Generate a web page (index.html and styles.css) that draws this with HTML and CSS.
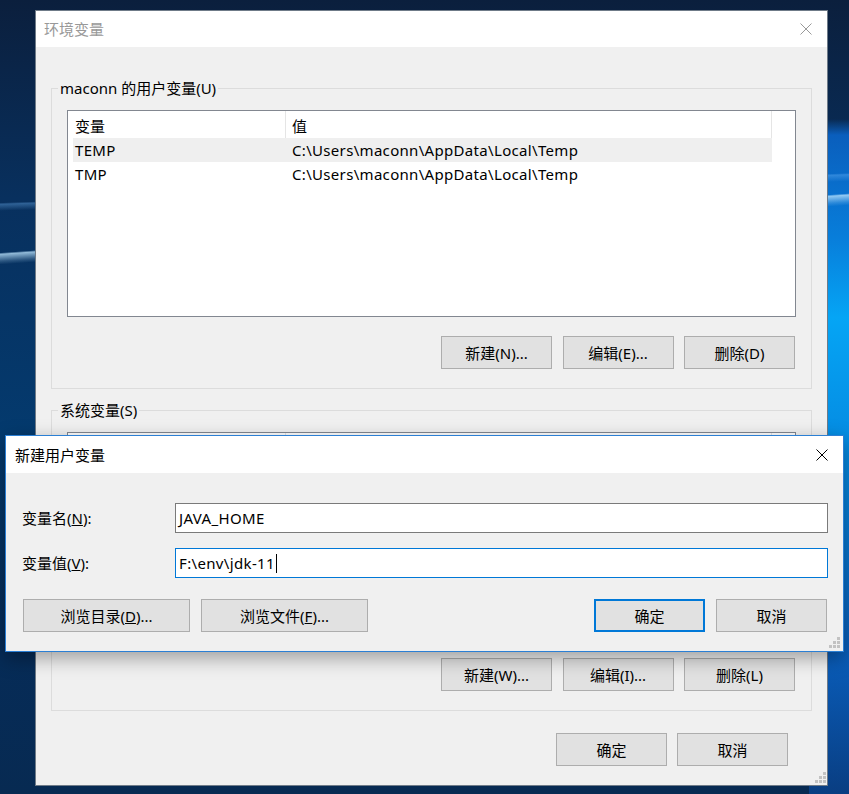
FILE: index.html
```html
<!doctype html>
<html>
  <head>
    <meta charset="utf-8">
    <title>环境变量</title>
    <link rel="stylesheet" href="styles.css">
  </head>
  <body>
    <!-- 环境变量 (inactive, behind the modal) -->
    <div class="window main">
      <div class="titlebar">
        <span class="title">环境变量</span>
        <svg class="close" width="12" height="12" viewBox="0 0 12 12"><path d="M0.5 0.5L11.5 11.5M11.5 0.5L0.5 11.5" /></svg>
      </div>
      <div class="body">
        <fieldset class="group">
          <legend>maconn 的用户变量(U)</legend>
          <div class="list">
            <div class="list-head">
              <span class="col-name">变量</span>
              <span class="col-value">值</span>
            </div>
            <div class="row selected">
              <span class="col-name">TEMP</span>
              <span class="col-value">C:\Users\maconn\AppData\Local\Temp</span>
            </div>
            <div class="row">
              <span class="col-name">TMP</span>
              <span class="col-value">C:\Users\maconn\AppData\Local\Temp</span>
            </div>
          </div>
          <div class="buttons">
            <button class="btn">新建(N)...</button>
            <button class="btn">编辑(E)...</button>
            <button class="btn">删除(D)</button>
          </div>
        </fieldset>

        <fieldset class="group second">
          <legend>系统变量(S)</legend>
          <!-- hidden under the dialog: only the header edge shows -->
          <div class="list">
            <div class="list-head">
              <span class="col-name"></span>
              <span class="col-value"></span>
            </div>
          </div>
          <div class="buttons">
            <button class="btn">新建(W)...</button>
            <button class="btn">编辑(I)...</button>
            <button class="btn">删除(L)</button>
          </div>
        </fieldset>

        <div class="buttons footer">
          <button class="btn">确定</button>
          <button class="btn">取消</button>
        </div>
      </div>
      <svg class="grip" width="11" height="11" viewBox="0 0 11 11"><rect x="8" y="0" width="3" height="3"/><rect x="4" y="4" width="3" height="3"/><rect x="8" y="4" width="3" height="3"/><rect x="0" y="8" width="3" height="3"/><rect x="4" y="8" width="3" height="3"/><rect x="8" y="8" width="3" height="3"/></svg>
    </div>

    <!-- 新建用户变量 (modal) -->
    <div class="window dialog">
      <div class="titlebar">
        <span class="title">新建用户变量</span>
        <svg class="close" width="12" height="12" viewBox="0 0 12 12"><path d="M0.5 0.5L11.5 11.5M11.5 0.5L0.5 11.5" /></svg>
      </div>
      <div class="body">
        <div class="form">
          <label>变量名(<u>N</u>):</label>
          <div class="field">JAVA_HOME</div>
          <label>变量值(<u>V</u>):</label>
          <div class="field focus">F:\env\jdk-11<span class="caret"></span></div>
        </div>
        <div class="buttons dialog-buttons">
          <button class="btn wide">浏览目录(<u>D</u>)...</button>
          <button class="btn wide">浏览文件(<u>F</u>)...</button>
          <span class="spacer"></span>
          <button class="btn default">确定</button>
          <button class="btn">取消</button>
        </div>
      </div>
      <svg class="grip" width="11" height="11" viewBox="0 0 11 11"><rect x="8" y="0" width="3" height="3"/><rect x="4" y="4" width="3" height="3"/><rect x="8" y="4" width="3" height="3"/><rect x="0" y="8" width="3" height="3"/><rect x="4" y="8" width="3" height="3"/><rect x="8" y="8" width="3" height="3"/></svg>
    </div>
  </body>
</html>
```

FILE: styles.css
```css
* {
  box-sizing: border-box;
}

html, body {
  margin: 0;
}

body {
  position: relative;
  width: 849px;
  height: 794px;
  overflow: hidden;
  font-family: "Noto Sans", "Noto Sans CJK SC", sans-serif;
  font-size: 15px;
  line-height: 20px;
  color: #000;
  background-color: #062c58;
  background-image:
    linear-gradient(176deg, transparent 0 29.6%, rgba(190,230,255,.75) 29.8%, rgba(190,230,255,.2) 30.6%, transparent 31%),
    linear-gradient(178deg, transparent 0 24.6%, rgba(120,190,255,.35) 24.8%, transparent 25.6%),
    linear-gradient(180deg, transparent 0 15%, rgba(10,100,200,.9) 17%, rgba(8,130,225,.95) 30%, rgba(5,165,245,1) 40%, rgba(5,150,240,.9) 55%, rgba(10,100,200,.85) 83%, rgba(10,70,150,.7) 100%),
    linear-gradient(180deg, #0b1f3d 0%, #08305e 25%, #043a6e 55%, #062c58 80%, #072a52 100%);
  background-size: 100% 100%, 100% 100%, 40px 100%, 100% 100%;
  background-position: 0 0, 0 0, right top, 0 0;
  background-repeat: no-repeat;
}

/* windows */

.window {
  position: absolute;
  background: #f0f0f0;
}

.main {
  left: 35px;
  top: 10px;
  width: 793px;
  height: 776px;
  border: 1px solid #6f7b88;
}

.dialog {
  left: 5px;
  top: 435px;
  width: 839px;
  height: 217px;
  border: 1px solid #2b7fd4;
  box-shadow: 0 6px 18px rgba(0,0,0,.35);
}

.titlebar {
  display: flex;
  align-items: center;
  height: 36px;
  padding-left: 8px;
  background: #fff;
}

.dialog .titlebar {
  height: 37px;
  padding-left: 9px;
}

.main .title {
  color: #999;
}

.close {
  margin-left: auto;
  margin-right: 15px;
  fill: none;
  stroke: #000;
  stroke-width: 1;
}

.main .close {
  stroke: #999;
}

.grip {
  position: absolute;
  right: 1px;
  bottom: 2px;
  fill: #c2c2c2;
}

.dialog .grip {
  right: 3px;
  bottom: 3px;
}

/* environment window body */

.main .body {
  padding: 0 39px 0 0;
}

.group {
  margin: 31px -24px 0 15px;
  padding: 12px 15px 19px 15px;
  border: 1px solid #dcdcdc;
  min-width: 0;
}

.group.second {
  margin-top: 11px;
}

.group legend {
  margin-left: -9px;
  padding: 0 2px;
  line-height: 20px;
}

.list {
  height: 207px;
  background: #fff;
  border: 1px solid #828790;
}

.list-head {
  display: flex;
  width: 704px;
  height: 27px;
}

.list-head span {
  display: flex;
  align-items: center;
  padding-top: 3px;
  border-right: 1px solid #e5e5e5;
}

.list-head .col-name {
  width: 218px;
  padding-left: 7px;
}

.list-head .col-value {
  flex: 1;
  padding-left: 6px;
}

.row {
  display: flex;
  align-items: center;
  width: 699px;
  height: 24px;
  margin-left: 5px;
  letter-spacing: 0.32px;
}

.row.selected {
  background: #efefef;
}

.row .col-name {
  width: 212px;
  padding-left: 2px;
}

.row .col-value {
  padding-left: 7px;
}

.buttons {
  display: flex;
  justify-content: flex-end;
  gap: 10.5px;
  margin-top: 19px;
  padding-right: 1px;
}

.buttons.footer {
  margin-top: 22px;
  gap: 10px;
  padding-right: 0;
}

.btn {
  width: 111px;
  height: 33px;
  padding: 0;
  font: inherit;
  color: #000;
  background: #e1e1e1;
  border: 1px solid #adadad;
}

.btn.wide {
  width: 167px;
}

.btn.default {
  border: 2px solid #0078d7;
}

/* new variable dialog */

.dialog .body {
  padding: 30px 15px 0 17px;
}

.form {
  display: grid;
  grid-template-columns: 152px 1fr;
  row-gap: 15px;
  align-items: center;
}

.form label {
  margin-left: -1px;
}

.field {
  display: flex;
  align-items: center;
  height: 30px;
  padding-left: 3px;
  background: #fff;
  border: 1px solid #7a7a7a;
  letter-spacing: 0.35px;
}

.field.focus {
  border-color: #0078d7;
}

.caret {
  display: inline-block;
  width: 1px;
  height: 19px;
  margin-left: 1px;
  background: #000;
}

.dialog-buttons {
  justify-content: flex-start;
  gap: 11px;
  margin-top: 21px;
}

.spacer {
  flex: 1;
}
```
